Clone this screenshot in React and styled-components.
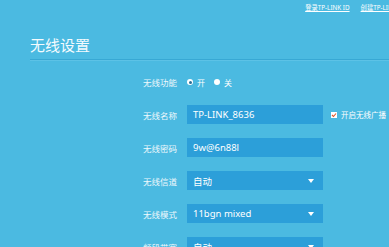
import styled, { createGlobalStyle } from "styled-components";

const GlobalStyle = createGlobalStyle`
  html, body {
    margin: 0;
    padding: 0;
    background: #4bbae1;
    overflow: hidden;
  }
  body {
    font-family: "Noto Sans", "Noto Sans CJK SC", sans-serif;
    color: #fff;
  }
`;

const Page = styled.div`
  width: 389px;
  height: 247px;
  background: #4bbae1;
  overflow: hidden;
`;

const TopLinks = styled.div`
  display: flex;
  justify-content: flex-end;
  gap: 11px;
  padding: 3px 0 0 0;
  margin-right: -16px;
  white-space: nowrap;
`;

const TopLink = styled.a`
  color: #fff;
  font-size: 6.3px;
  text-decoration: underline;
`;

const Title = styled.h1`
  margin: 23px 0 0 30px;
  font-family: "Noto Sans CJK SC", sans-serif;
  font-weight: 400;
  font-size: 15px;
  line-height: 20px;
  color: #f4fbfe;
`;

const Divider = styled.div`
  margin: 4px 0 0 30px;
  height: 1px;
  background: #38a8d4;
  border-bottom: 1px solid #5cc2e6;
`;

const Form = styled.div`
  display: flex;
  flex-direction: column;
  gap: 14px;
  margin: 15px 0 0 113px;
`;

const Row = styled.div`
  display: flex;
  align-items: center;
  gap: 10px;
  height: ${(p) => (p.$compact ? "12px" : "19px")};
  margin-bottom: ${(p) => (p.$compact ? "3px" : "0")};
`;

const Label = styled.span`
  width: 64px;
  text-align: right;
  font-family: "Noto Sans CJK SC", sans-serif;
  font-size: 8.5px;
  color: #eef8fc;
  white-space: nowrap;
`;

const Field = styled.div`
  width: 136px;
  height: 19px;
  box-sizing: border-box;
  padding: 0 6px;
  background: #2c9fd9;
  display: flex;
  align-items: center;
  justify-content: space-between;
  font-size: 9.5px;
  color: #fff;
  white-space: nowrap;
`;

const Arrow = styled.span`
  width: 0;
  height: 0;
  margin-right: 3px;
  border-left: 3px solid transparent;
  border-right: 3px solid transparent;
  border-top: 4px solid #fff;
`;

const Radios = styled.div`
  display: flex;
  align-items: center;
  gap: 9px;
`;

const RadioItem = styled.label`
  display: flex;
  align-items: center;
  gap: 4px;
  font-family: "Noto Sans CJK SC", sans-serif;
  font-size: 8px;
`;

const RadioDot = styled.span`
  width: 6px;
  height: 6px;
  border-radius: 50%;
  background: #fff;
  display: flex;
  align-items: center;
  justify-content: center;
  &::after {
    content: "";
    width: 3px;
    height: 3px;
    border-radius: 50%;
    background: ${(p) => (p.$on ? "#2a6f96" : "transparent")};
  }
`;

const Extra = styled.label`
  display: flex;
  align-items: center;
  gap: 4px;
  margin-left: -2px;
  font-family: "Noto Sans CJK SC", sans-serif;
  font-size: 7.5px;
  white-space: nowrap;
`;

const Check = styled.span`
  width: 6px;
  height: 6px;
  background: #fff;
  display: flex;
  align-items: center;
  justify-content: center;
`;

const Select = ({ value }) => (
  <Field>
    {value}
    <Arrow />
  </Field>
);

export default function App() {
  return (
    <Page>
      <GlobalStyle />
      <TopLinks>
        <TopLink>登录TP-LINK ID</TopLink>
        <TopLink>创建TP-LINK ID</TopLink>
      </TopLinks>
      <Title>无线设置</Title>
      <Divider />
      <Form>
        <Row $compact>
          <Label>无线功能</Label>
          <Radios>
            <RadioItem>
              <RadioDot $on />开
            </RadioItem>
            <RadioItem>
              <RadioDot />关
            </RadioItem>
          </Radios>
        </Row>
        <Row>
          <Label>无线名称</Label>
          <Field>TP-LINK_8636</Field>
          <Extra>
            <Check>
              <svg width="6" height="6" viewBox="0 0 6 6">
                <path d="M1 3 L2.5 4.5 L5 1.5" stroke="#e0572b" strokeWidth="1.1" fill="none" />
              </svg>
            </Check>
            开启无线广播
          </Extra>
        </Row>
        <Row>
          <Label>无线密码</Label>
          <Field>9w@6n88l</Field>
        </Row>
        <Row>
          <Label>无线信道</Label>
          <Select value="自动" />
        </Row>
        <Row>
          <Label>无线模式</Label>
          <Select value="11bgn mixed" />
        </Row>
        <Row>
          <Label>频段带宽</Label>
          <Select value="自动" />
        </Row>
      </Form>
    </Page>
  );
}
